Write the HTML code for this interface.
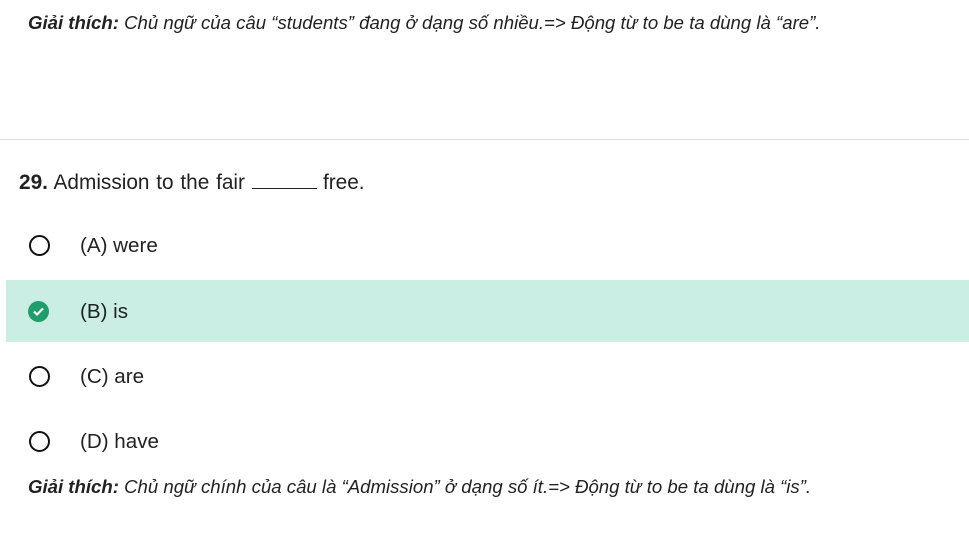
<!DOCTYPE html>
<html><head><meta charset="utf-8"><style>
body{margin:0;width:969px;height:539px;background:#fff;font-family:"Liberation Sans",sans-serif;color:#222;position:relative;overflow:hidden}
.t{position:absolute;white-space:nowrap}
.ex{font-size:18.6px;font-style:italic;color:#222;left:28px}
.q{font-size:20.8px;left:19px;top:170px;word-spacing:1px}
.opt{font-size:20.6px;left:80px}
.rad{position:absolute;left:29px;width:17px;height:17px;border:2.5px solid #111;border-radius:50%}
.bl{display:inline-block;width:65px;border-bottom:1.5px solid #222;height:18px;vertical-align:baseline;margin:0 6px 0 7px}
</style></head><body>
<div class="t ex" style="top:12px"><b>Giải thích:</b> Chủ ngữ của câu “students” đang ở dạng số nhiều.=&gt; Động từ to be ta dùng là “are”.</div>
<div style="position:absolute;left:0;top:139px;width:969px;height:1px;background:#ddd"></div>
<div class="t q"><b>29.</b> Admission to the fair<span class="bl"></span>free.</div>
<div class="rad" style="top:235px"></div>
<div class="t opt" style="top:234px">(A) were</div>
<div style="position:absolute;left:6px;top:280px;width:963px;height:62px;background:#cbeee4"></div>
<svg style="position:absolute;left:28px;top:301px" width="21" height="21" viewBox="0 0 21 21"><circle cx="10.5" cy="10.5" r="10.5" fill="#1e9e6a"/><path d="M6 10.5l3 3 6-6" stroke="#fff" stroke-width="2.2" fill="none"/></svg>
<div class="t opt" style="top:300px">(B) is</div>
<div class="rad" style="top:366px"></div>
<div class="t opt" style="top:365px">(C) are</div>
<div class="rad" style="top:431px"></div>
<div class="t opt" style="top:430px">(D) have</div>
<div class="t ex" style="top:476px"><b>Giải thích:</b> Chủ ngữ chính của câu là “Admission” ở dạng số ít.=&gt; Động từ to be ta dùng là “is”.</div>
</body></html>
